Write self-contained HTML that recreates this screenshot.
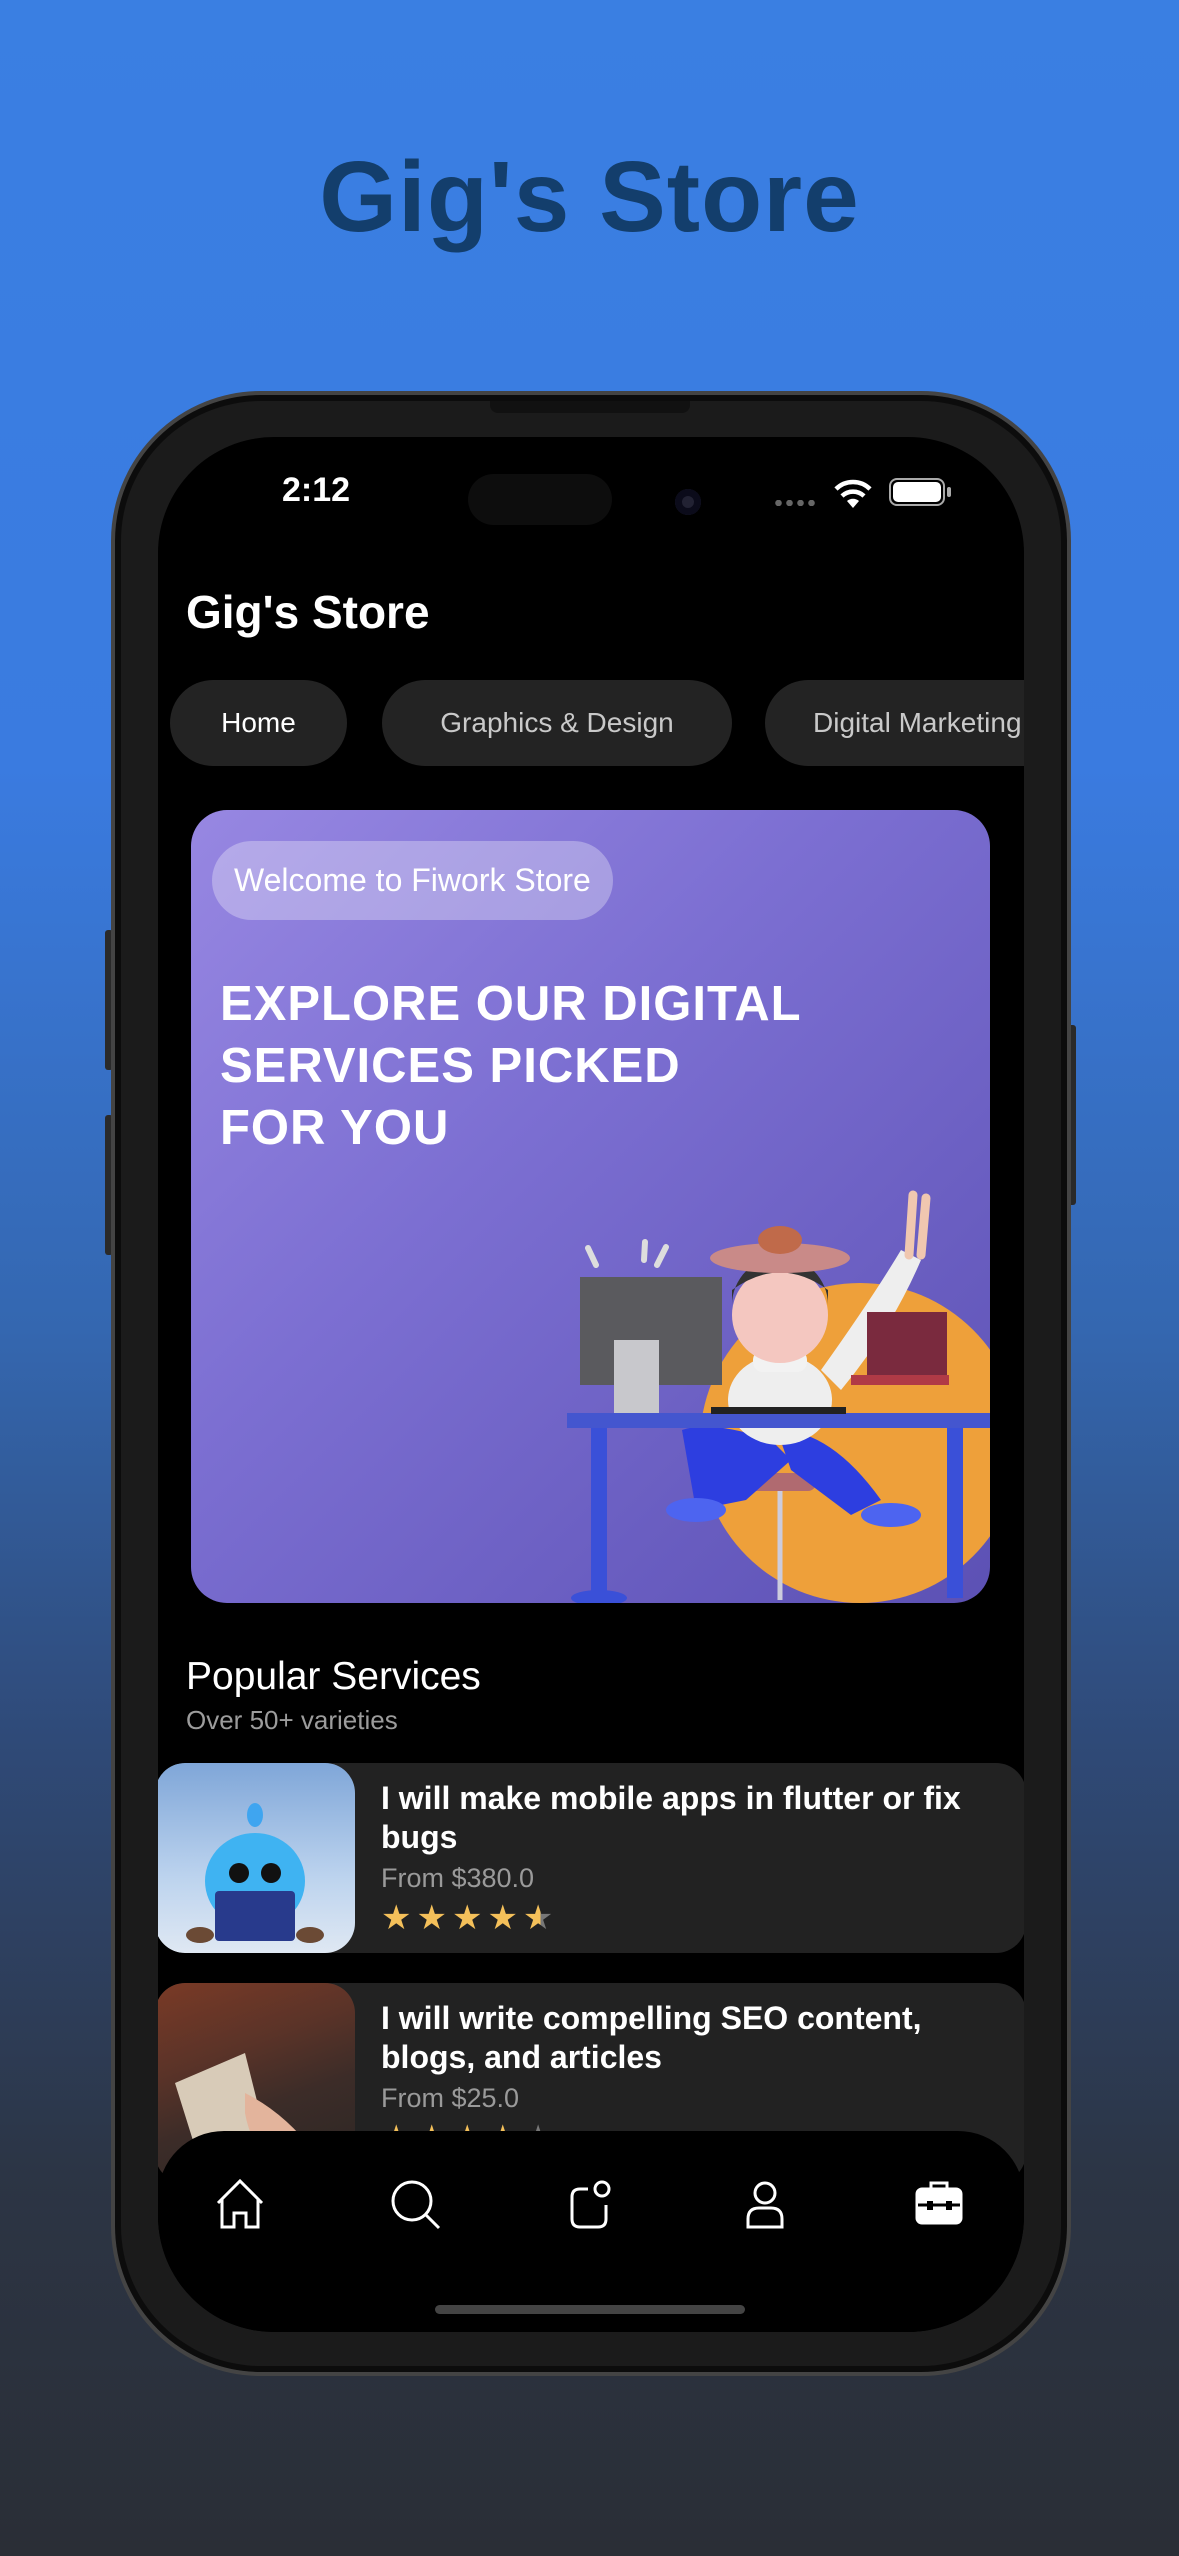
<!DOCTYPE html>
<html><head><meta charset="utf-8"><style>
*{margin:0;padding:0;box-sizing:border-box}
body{width:1179px;height:2556px;overflow:hidden;font-family:"Liberation Sans",sans-serif;background:linear-gradient(180deg,#3a7fe2 0%,#3a7be0 30%,#3467b0 52%,#2f4a78 68%,#2c3545 85%,#2a2e36 100%);position:relative}
.abs{position:absolute}
.title{left:0;width:1179px;top:140px;text-align:center;font-size:100px;font-weight:bold;color:#133e6c;letter-spacing:1px}
.frame{left:111px;top:391px;width:960px;height:1985px;border-radius:150px;background:#1b1b1b;border:4px solid #444;box-shadow:inset 0 0 0 6px #0c0c0c}
.screen{left:158px;top:437px;width:866px;height:1895px;border-radius:116px;background:#000;overflow:hidden}
.btn{background:#2a2a2a;width:8px;border-radius:3px}
.chip{position:absolute;top:243px;height:86px;border-radius:43px;background:#232323;font-size:28px;line-height:86px;color:#c9c9c9;white-space:nowrap;overflow:hidden}
.card{position:absolute;left:-3px;width:871px;border-radius:30px;background:#222;overflow:hidden}
.ct{position:absolute;left:226px;color:#fff;font-weight:bold;font-size:32px;line-height:39px;width:630px}
.cp{position:absolute;left:226px;color:#9a9a9a;font-size:27px}
.stars{position:absolute;left:226px;color:#f4c05a;font-size:34px;letter-spacing:5px}
</style></head><body>
<div class="abs title">Gig's Store</div>
<div class="abs btn" style="left:105px;top:930px;height:140px"></div>
<div class="abs btn" style="left:105px;top:1115px;height:140px"></div>
<div class="abs btn" style="left:1068px;top:1025px;height:180px"></div>
<div class="abs frame"></div>
<div class="abs" style="left:490px;top:401px;width:200px;height:12px;background:#111;border-radius:0 0 8px 8px"></div>
<div class="abs screen">
  <div class="abs" style="left:124px;top:34px;color:#fff;font-size:34px;font-weight:bold">2:12</div>
  <div class="abs" style="left:310px;top:37px;width:144px;height:51px;border-radius:26px;background:#0d0d0d"></div>
  <div class="abs" style="left:517px;top:52px;width:26px;height:26px;border-radius:13px;background:#0b0b1a;box-shadow:inset 0 0 0 7px #0b0b1a,inset 0 0 0 13px #223"></div>
  <div class="abs" style="left:615px;top:63px;width:45px;height:6px;background-image:radial-gradient(circle,#666 3px,transparent 3.5px);background-size:11px 6px"></div>
  <svg class="abs" style="left:676px;top:42px" width="38" height="30" viewBox="0 0 38 30"><path d="M19 29 L25 22 A9 9 0 0 0 13 22 Z" fill="#fff"/><path d="M8 17 A16 16 0 0 1 30 17" stroke="#fff" stroke-width="4.5" fill="none"/><path d="M2 10 A24 24 0 0 1 36 10" stroke="#fff" stroke-width="4.5" fill="none"/></svg>
  <div class="abs" style="left:731px;top:41px;width:56px;height:28px;border-radius:8px;border:2.5px solid #aaa;padding:2px"><div style="width:100%;height:100%;background:#fff;border-radius:5px"></div></div>
  <div class="abs" style="left:789px;top:50px;width:4px;height:10px;background:#aaa;border-radius:2px"></div>

  <div class="abs" style="left:28px;top:148px;color:#fff;font-size:46px;font-weight:bold">Gig's Store</div>
  <div class="abs" style="left:0;top:0;width:866px;height:400px;overflow:hidden">
    <div class="chip" style="left:12px;width:177px;color:#fff;text-align:center">Home</div>
    <div class="chip" style="left:224px;width:350px;text-align:center">Graphics &amp; Design</div>
    <div class="chip" style="left:607px;width:259px;padding-left:48px;border-radius:43px 0 0 43px">Digital Marketing</div>
  </div>

  <div class="abs" style="left:33px;top:373px;width:799px;height:793px;border-radius:36px;overflow:hidden;background:linear-gradient(135deg,#9787e2 0%,#7c6fd2 40%,#5c51b4 100%)">
    <div class="abs" style="left:21px;top:31px;height:79px;padding:0 22px;border-radius:40px;background:rgba(255,255,255,0.3);color:#fff;font-size:32px;line-height:79px">Welcome to Fiwork Store</div>
    <div class="abs" style="left:29px;top:163px;color:#fff;font-size:49px;font-weight:bold;line-height:62px;letter-spacing:1px">EXPLORE OUR DIGITAL<br>SERVICES PICKED<br>FOR YOU</div>
    <svg class="abs" style="left:0;top:0" width="799" height="793" viewBox="0 0 799 793">
      <circle cx="669" cy="633" r="160" fill="#eea03a"/>
      <rect x="400" y="618" width="16" height="170" fill="#3a50d8"/>
      <rect x="756" y="618" width="16" height="170" fill="#3a50d8"/>
      <ellipse cx="408" cy="788" rx="28" ry="8" fill="#3a50d8"/>
      <line x1="589" y1="680" x2="589" y2="790" stroke="#ccd" stroke-width="5"/>
      <rect x="555" y="663" width="70" height="18" rx="8" fill="#b06a70"/>
      <path d="M491 620 Q520 610 580 630 L600 650 L555 690 L505 700 Z" fill="#2d3ee0"/>
      <path d="M586 620 Q640 620 690 690 L660 705 L600 660 Z" fill="#2d3ee0"/>
      <ellipse cx="505" cy="700" rx="30" ry="12" fill="#4d64f0"/>
      <ellipse cx="700" cy="705" rx="30" ry="12" fill="#4d64f0"/>
      <path d="M630 560 Q680 490 710 440 L730 450 Q700 520 650 580 Z" fill="#eee"/>
      <ellipse cx="589" cy="590" rx="52" ry="45" fill="#eee"/>
      <rect x="562" y="540" width="54" height="22" rx="10" fill="#f2f2f2"/>
      <circle cx="589" cy="505" r="48" fill="#f4c7c0"/>
      <path d="M541 495 A48 48 0 0 1 637 495 L637 480 Q589 445 541 480 Z" fill="#333"/>
      <ellipse cx="589" cy="448" rx="70" ry="15" fill="#c98a88"/>
      <ellipse cx="589" cy="430" rx="22" ry="14" fill="#c06a4a"/>
      <path d="M718 445 L722 385 M730 445 L735 388" stroke="#f0c7b0" stroke-width="9" stroke-linecap="round"/>
      <rect x="389" y="467" width="142" height="108" fill="#5a5a5e"/>
      <rect x="423" y="530" width="45" height="78" fill="#c8c8cc"/>
      <path d="M397 438 L405 455 M454 432 L453 450 M475 437 L466 455" stroke="#ddd" stroke-width="6" stroke-linecap="round"/>
      <rect x="676" y="502" width="80" height="63" fill="#7a2a3e"/>
      <rect x="660" y="565" width="98" height="10" fill="#b03a46"/>
      <rect x="376" y="603" width="423" height="15" fill="#4456cf"/>
      <rect x="520" y="597" width="135" height="7" fill="#222"/>
    </svg>
  </div>

  <div class="abs" style="left:28px;top:1218px;color:#fff;font-size:39px">Popular Services</div>
  <div class="abs" style="left:28px;top:1268px;color:#9c9c9c;font-size:26px">Over 50+ varieties</div>

  <div class="card" style="top:1326px;height:190px">
    <div class="abs" style="left:0;top:0;width:200px;height:190px;border-radius:30px;background:linear-gradient(180deg,#7fa6d8 0%,#bcd3ee 60%,#dfe8f3 100%);overflow:hidden">
      <svg width="200" height="190" viewBox="0 0 200 190"><ellipse cx="100" cy="118" rx="50" ry="48" fill="#3fb3f2"/><ellipse cx="100" cy="52" rx="8" ry="12" fill="#3fa5f0"/><circle cx="84" cy="110" r="10" fill="#111"/><circle cx="116" cy="110" r="10" fill="#111"/><rect x="60" y="128" width="80" height="50" rx="4" fill="#283a8c"/><ellipse cx="45" cy="172" rx="14" ry="8" fill="#6b4a35"/><ellipse cx="155" cy="172" rx="14" ry="8" fill="#6b4a35"/></svg>
    </div>
    <div class="ct" style="top:16px">I will make mobile apps in flutter or fix bugs</div>
    <div class="cp" style="top:100px">From $380.0</div>
    <div class="stars" style="top:135px">★★★★<span style="background:linear-gradient(90deg,#f4c05a 50%,#777 50%);-webkit-background-clip:text;color:transparent">★</span></div>
  </div>
  <div class="card" style="top:1546px;height:200px">
    <div class="abs" style="left:0;top:0;width:200px;height:200px;border-radius:30px 30px 0 0;background:linear-gradient(160deg,#7a3a26 0%,#5a3328 35%,#3c2c28 60%,#2a2624 100%);overflow:hidden">
      <svg width="200" height="200" viewBox="0 0 200 200"><path d="M20 100 L90 70 L110 150 L45 180 Z" fill="#d8cbb8"/><path d="M90 110 Q130 130 160 170 L120 190 Q95 160 90 130 Z" fill="#e3b49c"/></svg>
    </div>
    <div class="ct" style="top:16px">I will write compelling SEO content, blogs, and articles</div>
    <div class="cp" style="top:100px">From $25.0</div>
    <div class="stars" style="top:135px">★★★★<span style="color:#777">★</span></div>
  </div>

  <div class="abs" style="left:0;top:1694px;width:866px;height:220px;background:#000;border-radius:66px 66px 0 0"></div>
  <svg class="abs" style="left:0;top:1738px" width="866" height="60" viewBox="0 0 866 60" fill="none" stroke="#fff" stroke-width="3">
    <g transform="translate(-22 0)"><path d="M82 28 L104 6 L126 28 M86 24 L86 52 L98 52 L98 38 L110 38 L110 52 L122 52 L122 24"/></g>
    <circle cx="254" cy="26" r="19"/><path d="M268 40 L281 53"/>
    <g transform="translate(-14 0)"><path d="M444 14 L436 14 Q428 14 428 22 L428 44 Q428 52 436 52 L454 52 Q462 52 462 44 L462 30"/><circle cx="458" cy="14" r="7"/></g>
    <circle cx="607" cy="18" r="10"/><path d="M590 52 L590 44 Q590 33 601 33 L613 33 Q624 33 624 44 L624 52 Z"/>
    <g transform="translate(-6 0)"><rect x="765" y="14" width="44" height="34" rx="5" fill="#fff"/><path d="M779 14 L779 8 L795 8 L795 14"/><path d="M766 30 L808 30" stroke="#000" stroke-width="3"/><rect x="775" y="26" width="6" height="9" fill="#000" stroke="none"/><rect x="794" y="26" width="6" height="9" fill="#000" stroke="none"/></g>
  </svg>
  <div class="abs" style="left:277px;top:1868px;width:310px;height:9px;border-radius:5px;background:#444"></div>
</div>
</body></html>
